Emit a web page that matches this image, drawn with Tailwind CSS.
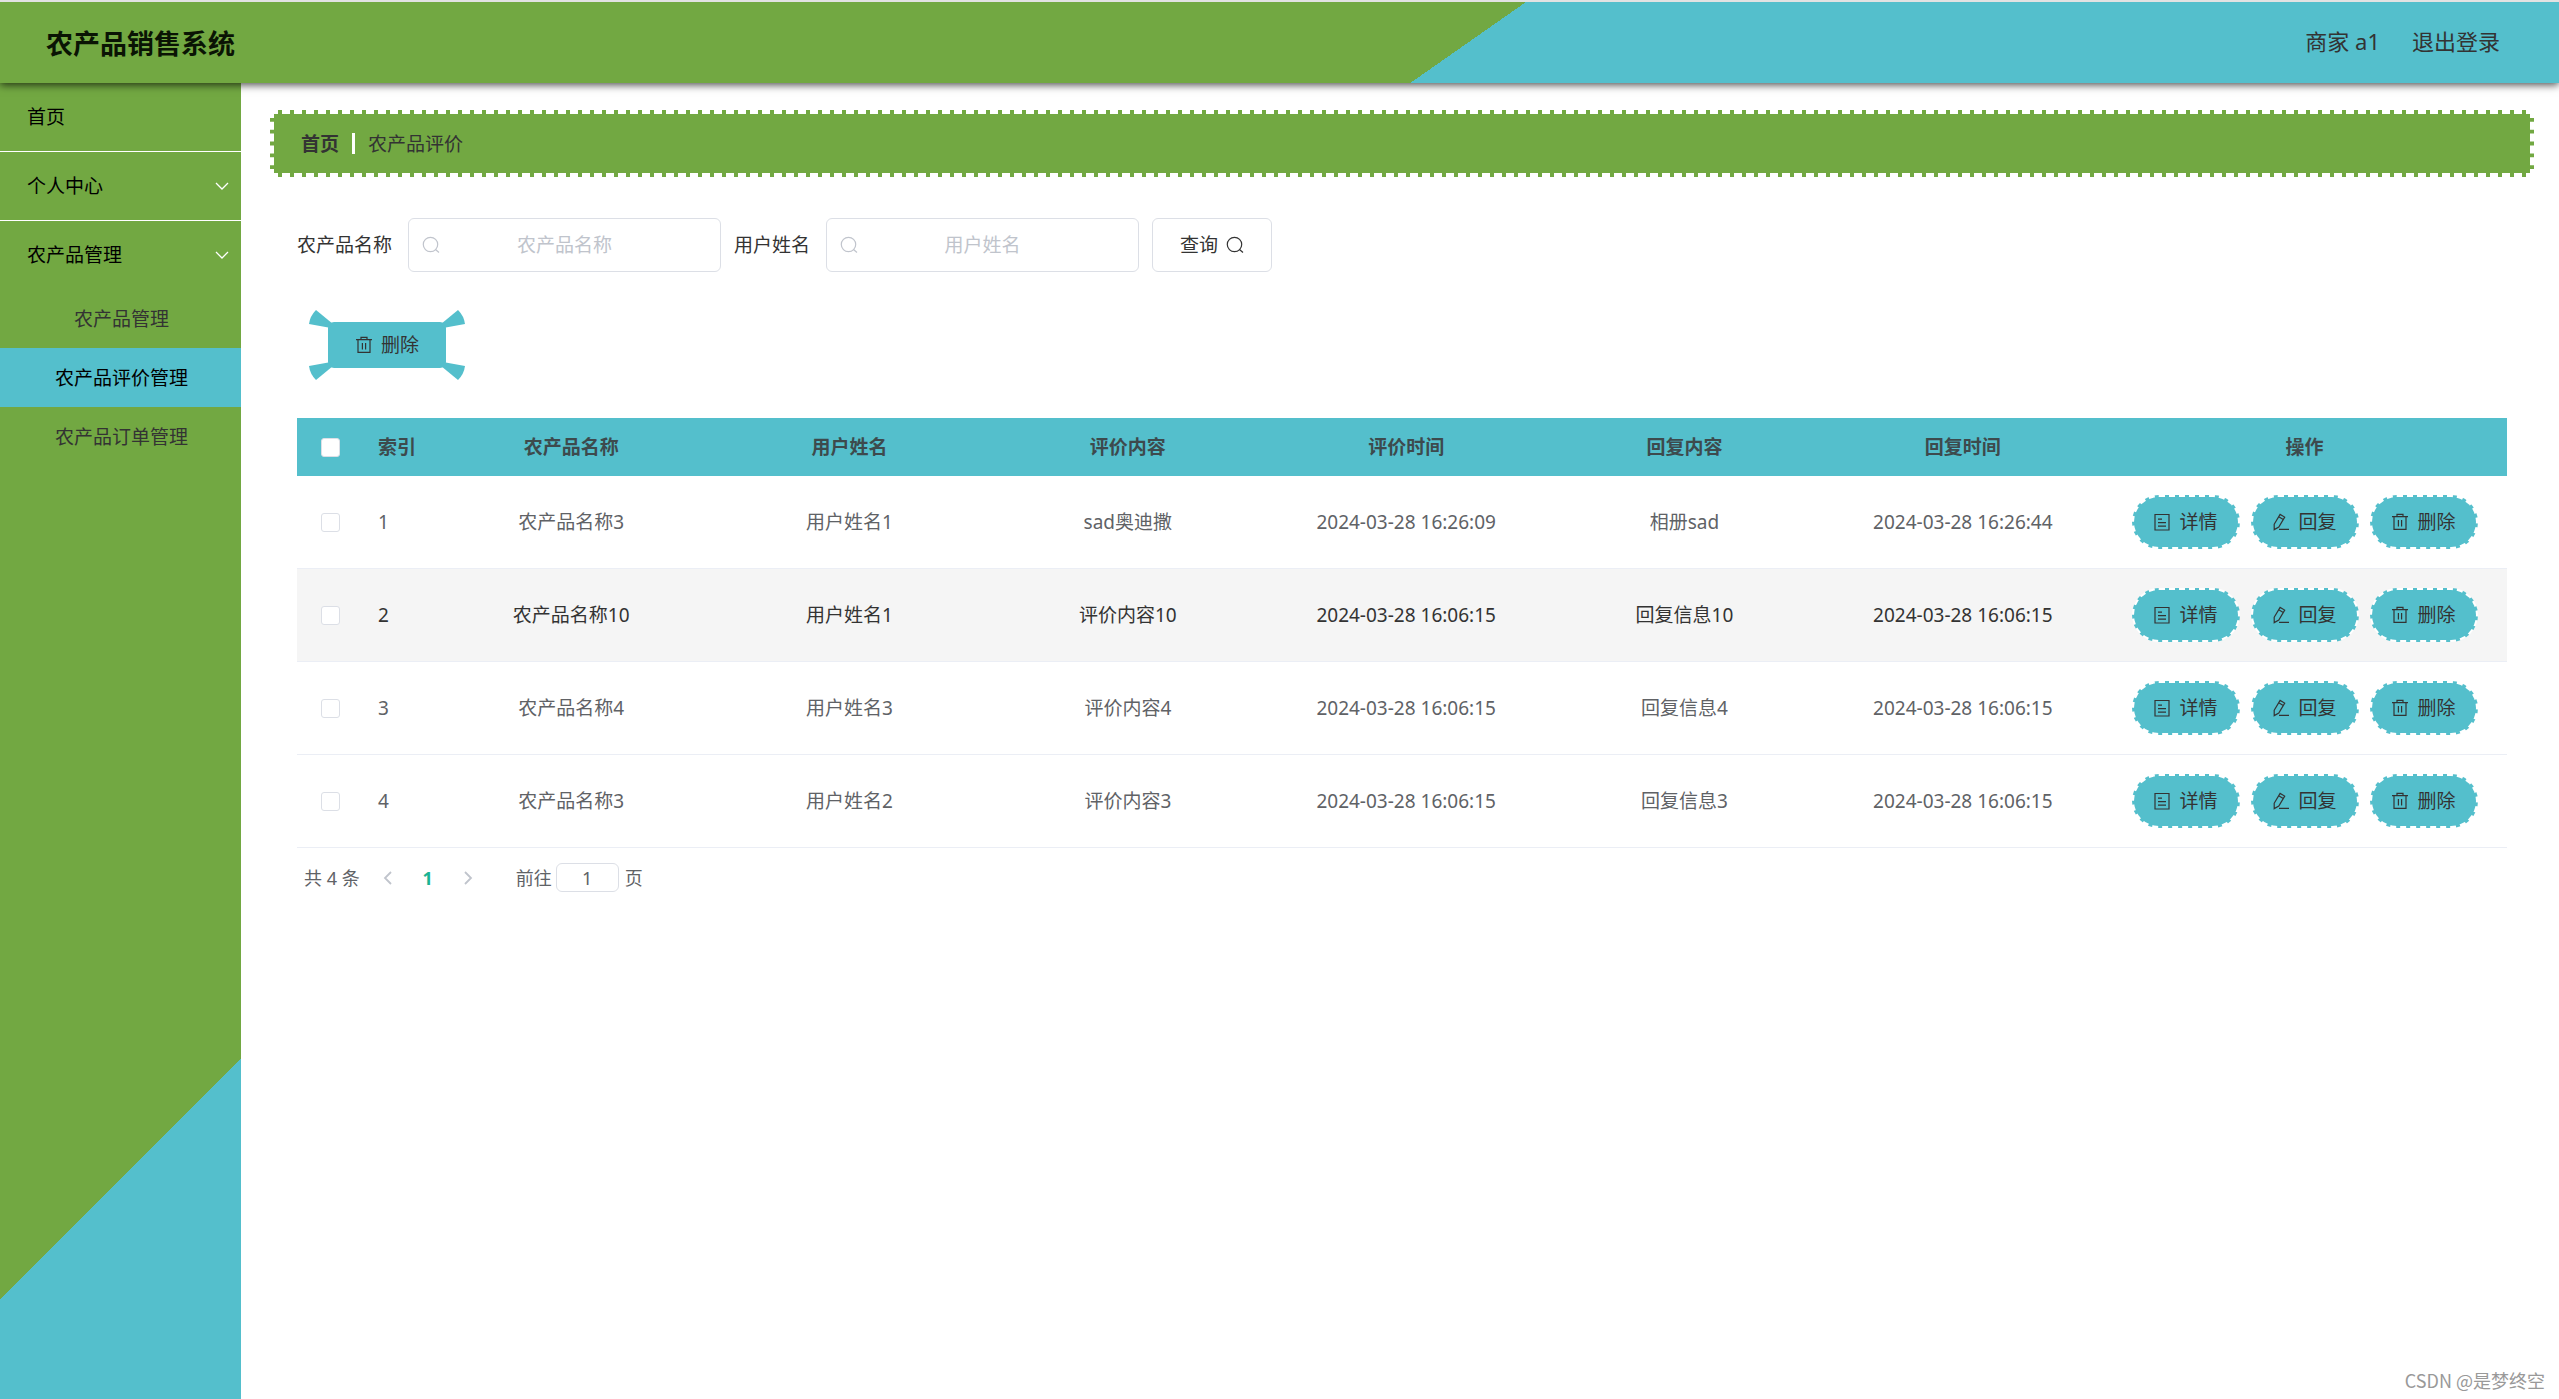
<!DOCTYPE html>
<html lang="zh-CN">
<head>
<meta charset="utf-8">
<meta name="viewport" content="width=device-width, initial-scale=1">
<title>农产品销售系统</title>
<script src="https://cdn.jsdelivr.net/npm/@tailwindcss/browser@4"></script>
</head>
<body class="flex min-h-screen flex-col bg-white font-['Noto_Sans','Noto_Sans_CJK_SC',sans-serif] text-[19px] leading-7 text-[#333]">

<svg class="hidden" aria-hidden="true">
  <symbol id="i-search" viewBox="0 0 18 18"><g fill="none" stroke="currentColor" stroke-width="1.2"><circle cx="8.5" cy="8.5" r="7.2"/><path d="M13.5 13.5l3.5 3"/></g></symbol>
  <symbol id="i-trash" viewBox="0 0 18 18"><path fill="none" stroke="currentColor" stroke-width="1.2" d="M1 3.6h16M3 3.6V16.4h12V3.6M6 3.6V1.4h6v2.2M7.4 7v6.4M10.6 7v6.4"/></symbol>
  <symbol id="i-doc" viewBox="0 0 18 18"><path fill="none" stroke="currentColor" stroke-width="1.2" d="M2 1.5h14v15.5H2zM5 6.2h4M5 9.6h8M5 13.2h8"/></symbol>
  <symbol id="i-edit" viewBox="0 0 18 18"><path fill="none" stroke="currentColor" stroke-width="1.2" d="M2.2 11.2L8.1 1.4l4.6 2.7L6.8 14l-4.6 2.6zM6.7 3.7l4.6 2.7M7 16.4h10"/></symbol>
  <symbol id="i-down" viewBox="0 0 14 14"><path fill="none" stroke="currentColor" stroke-width="1.3" d="M1 4l6 6 6-6"/></symbol>
  <symbol id="i-left" viewBox="0 0 14 14"><path fill="none" stroke="currentColor" stroke-width="1.8" d="M10 1L4 7l6 6"/></symbol>
  <symbol id="i-right" viewBox="0 0 14 14"><path fill="none" stroke="currentColor" stroke-width="1.8" d="M4 1l6 6-6 6"/></symbol>
</svg>

<header class="relative z-10 flex h-[83px] items-center justify-between border-t-2 border-[#e2e2e2] bg-[linear-gradient(145deg,#72a842_57.1%,#54bfcc_57.1%)] bg-origin-border pl-[46px] pr-[59px] shadow-[0_2px_8px_rgba(0,0,0,0.7)]">
  <h1 class="pt-[2px] text-[27px] font-bold text-[#0a1404]">农产品销售系统</h1>
  <div class="flex gap-8 pb-[3px] text-[22px] text-[#333]">
    <span>商家 a1</span>
    <a href="#">退出登录</a>
  </div>
</header>

<div class="flex flex-1">
  <aside class="w-[241px] shrink-0 bg-[linear-gradient(135deg,#72a842_78.1%,#54bfcc_78.1%)] text-black">
    <nav>
      <a href="#" class="flex h-[69px] items-center border-b border-white px-[27px]">首页</a>
      <button type="button" class="flex h-[69px] w-full items-center justify-between border-b border-white pl-[27px] pr-3">个人中心<svg class="size-[14px] text-white"><use href="#i-down"/></svg></button>
      <button type="button" class="flex h-[68px] w-full items-center justify-between pl-[27px] pr-3">农产品管理<svg class="size-[14px] text-white"><use href="#i-down"/></svg></button>
      <a href="#" class="flex h-[59px] items-center justify-center pl-[2px] text-[#333]">农产品管理</a>
      <a href="#" class="flex h-[59px] items-center justify-center bg-[#54bfcc] pl-[2px]">农产品评价管理</a>
      <a href="#" class="flex h-[59px] items-center justify-center pl-[2px] text-[#333]">农产品订单管理</a>
    </nav>
  </aside>

  <main class="flex min-w-0 flex-1 flex-col pl-[29px] pr-[25px] pt-[27px]">
    <nav class="flex h-[67px] items-center gap-[13px] border-4 border-dashed border-white bg-[#72a842] px-[27px]">
      <a href="#" class="font-bold">首页</a>
      <span class="h-[21px] w-[3px] bg-white"></span>
      <span>农产品评价</span>
    </nav>

    <div class="flex flex-col pl-[27px] pr-[27px] pt-[41px]">
      <form class="flex items-center">
        <label for="q-name" class="mr-4">农产品名称</label>
        <div class="relative mr-[13px] h-[54px] w-[313px]">
          <svg class="absolute left-[14px] top-[18px] size-[18px] text-[#c0c4cc]"><use href="#i-search"/></svg>
          <input id="q-name" type="text" placeholder="农产品名称" class="size-full rounded-md border border-[#dcdfe6] px-10 text-center placeholder:text-[#c0c4cc]">
        </div>
        <label for="q-user" class="mr-4">用户姓名</label>
        <div class="relative mr-[13px] h-[54px] w-[313px]">
          <svg class="absolute left-[14px] top-[18px] size-[18px] text-[#c0c4cc]"><use href="#i-search"/></svg>
          <input id="q-user" type="text" placeholder="用户姓名" class="size-full rounded-md border border-[#dcdfe6] px-10 text-center placeholder:text-[#c0c4cc]">
        </div>
        <button type="button" class="flex h-[54px] w-[120px] items-center justify-center gap-2 rounded-md border border-[#dcdfe6]">查询<svg class="size-[18px]"><use href="#i-search"/></svg></button>
      </form>

      <div class="flex px-[31px] py-[50px]">
        <button type="button" class="relative flex h-[46px] w-[118px] items-center justify-center gap-2 rounded-md bg-[#54bfcc]">
          <!-- corner wedges around the button -->
          <svg class="absolute -left-5 -top-5 h-[86px] w-[158px]" viewBox="0 0 158 86" fill="#54bfcc" aria-hidden="true">
            <path id="wedge" d="M8 8Q2 14 1 22L23 26L25 22Z"/>
            <use href="#wedge" transform="matrix(-1 0 0 1 158 0)"/>
            <use href="#wedge" transform="matrix(1 0 0 -1 0 86)"/>
            <use href="#wedge" transform="matrix(-1 0 0 -1 158 86)"/>
          </svg>
          <svg class="size-[18px]"><use href="#i-trash"/></svg>删除
        </button>
      </div>

      <table class="w-full table-fixed border-separate border-spacing-0 text-center text-[#606266] [&_input]:block [&_input]:size-[19px] [&_input]:appearance-none [&_input]:rounded-[3px] [&_input]:border [&_input]:border-[#dcdfe6] [&_input]:bg-white [&_input]:mx-auto [&_tbody_td]:h-[93px] [&_tbody_td]:border-b [&_tbody_td]:border-[#ebeef5] [&_button]:flex [&_button]:h-[54px] [&_button]:w-[108px] [&_button]:items-center [&_button]:justify-center [&_button]:gap-2 [&_button]:rounded-full [&_button]:border-2 [&_button]:border-dashed [&_button]:border-white [&_button]:bg-[#54bfcc] [&_button]:text-[#333] [&_svg]:size-[18px]">
        <colgroup>
          <col class="w-[66px]"><col class="w-[69px]"><col><col><col><col><col><col><col class="w-[405px]">
        </colgroup>
        <thead>
          <tr class="h-[58px] bg-[#54bfcc] text-[#3d4a4d]">
            <th><input type="checkbox" aria-label="全选"></th>
            <th class="pl-[15px] text-left">索引</th><th>农产品名称</th><th>用户姓名</th><th>评价内容</th><th>评价时间</th><th>回复内容</th><th>回复时间</th><th>操作</th>
          </tr>
        </thead>
        <tbody>
          <tr>
            <td><input type="checkbox" aria-label="选择第1行"></td>
            <td class="pl-[15px] text-left">1</td><td>农产品名称3</td><td>用户姓名1</td><td>sad奥迪撒</td><td>2024-03-28 16:26:09</td><td>相册sad</td><td>2024-03-28 16:26:44</td>
            <td><div class="flex justify-center gap-[11px]">
              <button type="button"><svg><use href="#i-doc"/></svg>详情</button>
              <button type="button"><svg><use href="#i-edit"/></svg>回复</button>
              <button type="button"><svg><use href="#i-trash"/></svg>删除</button>
            </div></td>
          </tr>
          <tr class="bg-[#f5f5f5] text-[#333]">
            <td><input type="checkbox" aria-label="选择第2行"></td>
            <td class="pl-[15px] text-left">2</td><td>农产品名称10</td><td>用户姓名1</td><td>评价内容10</td><td>2024-03-28 16:06:15</td><td>回复信息10</td><td>2024-03-28 16:06:15</td>
            <td><div class="flex justify-center gap-[11px]">
              <button type="button"><svg><use href="#i-doc"/></svg>详情</button>
              <button type="button"><svg><use href="#i-edit"/></svg>回复</button>
              <button type="button"><svg><use href="#i-trash"/></svg>删除</button>
            </div></td>
          </tr>
          <tr>
            <td><input type="checkbox" aria-label="选择第3行"></td>
            <td class="pl-[15px] text-left">3</td><td>农产品名称4</td><td>用户姓名3</td><td>评价内容4</td><td>2024-03-28 16:06:15</td><td>回复信息4</td><td>2024-03-28 16:06:15</td>
            <td><div class="flex justify-center gap-[11px]">
              <button type="button"><svg><use href="#i-doc"/></svg>详情</button>
              <button type="button"><svg><use href="#i-edit"/></svg>回复</button>
              <button type="button"><svg><use href="#i-trash"/></svg>删除</button>
            </div></td>
          </tr>
          <tr>
            <td><input type="checkbox" aria-label="选择第4行"></td>
            <td class="pl-[15px] text-left">4</td><td>农产品名称3</td><td>用户姓名2</td><td>评价内容3</td><td>2024-03-28 16:06:15</td><td>回复信息3</td><td>2024-03-28 16:06:15</td>
            <td><div class="flex justify-center gap-[11px]">
              <button type="button"><svg><use href="#i-doc"/></svg>详情</button>
              <button type="button"><svg><use href="#i-edit"/></svg>回复</button>
              <button type="button"><svg><use href="#i-trash"/></svg>删除</button>
            </div></td>
          </tr>
        </tbody>
      </table>

      <div class="flex items-center pl-[7px] pt-[15px] text-[18px] text-[#606266]">
        <span class="mr-2">共 4 条</span>
        <button type="button" aria-label="上一页" class="flex w-10 justify-center text-[#c0c4cc]"><svg class="size-[14px]"><use href="#i-left"/></svg></button>
        <button type="button" class="w-10 text-center font-bold text-[#1ab394]">1</button>
        <button type="button" aria-label="下一页" class="flex w-10 justify-center text-[#c0c4cc]"><svg class="size-[14px]"><use href="#i-right"/></svg></button>
        <label for="page" class="ml-7 mr-1">前往</label>
        <input id="page" type="text" value="1" class="mr-[6px] h-[29px] w-[63px] rounded-md border border-[#dcdfe6] text-center">
        <span>页</span>
      </div>
    </div>

    <footer class="-mr-[11px] mt-auto pb-[5px] text-right font-['Noto_Sans_CJK_SC',sans-serif] text-[18px] text-[#999]">CSDN @是梦终空</footer>
  </main>
</div>
</body>
</html>
